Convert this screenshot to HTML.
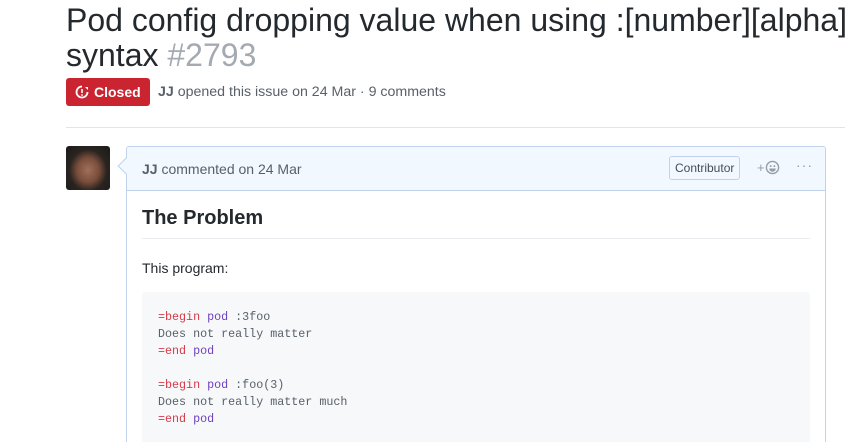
<!DOCTYPE html>
<html style="overflow:hidden;height:442px"><head><meta charset="utf-8"><style>
*{margin:0;padding:0;box-sizing:border-box}
body{width:845px;height:442px;overflow:hidden;background:#fff;font-family:"Liberation Sans",sans-serif;color:#24292e;position:relative}
.t{position:absolute;left:66px;font-size:32px;line-height:40px;white-space:nowrap;color:#24292e}
.num{color:#a3aab1}
.badge{position:absolute;left:66px;top:78px;width:84px;height:28px;background:#cb2431;border-radius:3px;color:#fff;font-weight:bold;font-size:14px;line-height:28px;padding-left:28px}
.meta{position:absolute;left:158px;top:84px;font-size:14.2px;color:#586069}
.hr{position:absolute;left:66px;right:0;top:127px;border-top:1px solid #e1e4e8}
.av{position:absolute;left:66px;top:146px;width:44px;height:44px;border-radius:3px;background:radial-gradient(ellipse at 50% 55%,#a0705a 0,#7a4e3c 35%,#2a2420 60%,#1a1a1a 100%)}
.box{position:absolute;left:126px;top:146px;width:700px;height:300px;border:1px solid #c0d3eb;border-radius:3px;overflow:hidden}
.hd{height:44px;background:#f1f8ff;border-bottom:1px solid #c0d3eb;font-size:14px;color:#586069;padding:14px 15px;position:relative}
.arrow{position:absolute;left:120px;top:160px;width:12px;height:12px;background:#f1f8ff;border-left:1px solid #c0d3eb;border-bottom:1px solid #c0d3eb;transform:rotate(45deg)}
.contrib{position:absolute;left:542px;top:9px;height:24px;border:1px solid #c0d3eb;border-radius:3px;font-size:12px;line-height:22px;padding:0 5px;color:#444d56}
h2{position:absolute;left:15px;top:60px;width:668px;font-size:20px;font-weight:bold;padding-bottom:8px;border-bottom:1px solid #eaecef}
.p{position:absolute;left:15px;top:113px;font-size:14px}
pre{position:absolute;left:15px;top:145px;width:668px;height:200px;background:#f6f8fa;border-radius:3px;padding:17px 16px;font-family:"Liberation Mono",monospace;font-size:11.7px;line-height:17px;color:#586069}
.r{color:#d73a49}.v{color:#6f42c1}
</style></head><body>
<div class="t" style="top:0">Pod config dropping value when using :[number][alpha] pod</div>
<div class="t" style="top:35px">syntax <span class="num">#2793</span></div>
<div class="badge"><svg style="position:absolute;left:9px;top:7px" width="14" height="14" viewBox="0 0 14 14"><path d="M7 1.5a5.5 5.5 0 1 0 5.5 5.5" fill="none" stroke="#fff" stroke-width="1.8"/><path d="M6.2 4v4h1.6V4z M10 2l3 0 0 3z" fill="#fff"/><circle cx="7" cy="10" r="0.9" fill="#fff"/></svg>Closed</div>
<div class="meta"><b>JJ</b> opened this issue on 24 Mar · 9 comments</div>
<div class="hr"></div>
<div class="av"></div>
<div class="box">
<div class="hd"><b>JJ</b> commented on 24 Mar
<span class="contrib">Contributor</span>
<span style="position:absolute;left:630px;top:13px;color:#959da5;font-size:13px">+<svg width="15" height="15" viewBox="0 0 16 16" style="vertical-align:-3px"><circle cx="8" cy="8" r="6.5" fill="none" stroke="#959da5" stroke-width="1.5"/><circle cx="6" cy="6.5" r="1" fill="#959da5"/><circle cx="10" cy="6.5" r="1" fill="#959da5"/><path d="M4.5 9h7a3.5 3.5 0 0 1-7 0z" fill="#959da5"/></svg></span>
<span style="position:absolute;left:669px;top:10px;color:#959da5;font-size:14px;letter-spacing:1px">···</span>
</div>
<h2>The Problem</h2>
<div class="p">This program:</div>
<pre><span class="r">=begin</span> <span class="v">pod</span> :3foo
Does not really matter
<span class="r">=end</span> <span class="v">pod</span>

<span class="r">=begin</span> <span class="v">pod</span> :foo(3)
Does not really matter much
<span class="r">=end</span> <span class="v">pod</span></pre>
</div>
<div class="arrow"></div>
</body></html>
